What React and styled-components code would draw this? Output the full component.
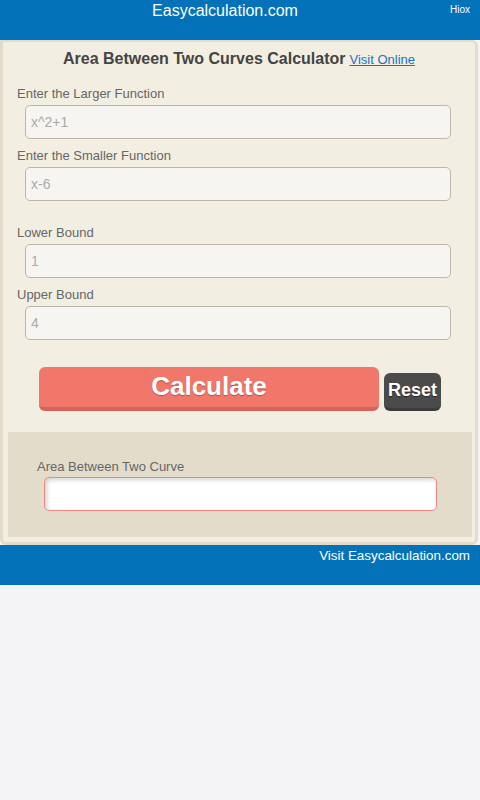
import React from "react";
import styled, { createGlobalStyle } from "styled-components";

const Global = createGlobalStyle`
  html, body { margin: 0; padding: 0; background: #f4f3f6; }
  body { font-family: "Liberation Sans", Arial, sans-serif; }
  * { box-sizing: border-box; }
`;

const Header = styled.header`
  display: flex;
  align-items: flex-start;
  height: 40px;
  background: #0372b9;
  color: #fff;
`;

const SiteName = styled.div`
  flex: 1;
  text-align: center;
  font-size: 16px;
  line-height: 20px;
  padding-top: 1px;
`;

const Hiox = styled.div`
  width: 20px;
  margin-right: 10px;
  font-size: 10px;
  line-height: 20px;
  text-align: right;
`;

const Card = styled.main`
  width: 478px;
  background: #f2eee2;
  border: 3px solid #e3dccb;
  border-top-width: 2px;
  border-radius: 0 6px 6px 6px;
  padding: 7px 2px 5px;
`;

const TitleRow = styled.h1`
  margin: 0 0 15px;
  text-align: center;
  font-size: 16px;
  line-height: 20px;
  font-weight: bold;
  color: #444;
`;

const VisitLink = styled.a`
  font-size: 13px;
  font-weight: normal;
  color: #1f6fcb;
  text-decoration: underline;
  margin-left: 4px;
`;

const Form = styled.div`
  padding-left: 12px;
`;

const Field = styled.div`
  margin-bottom: ${(p) => (p.$mb === undefined ? 8 : p.$mb)}px;
`;

const Label = styled.label`
  display: block;
  font-size: 13px;
  line-height: 16px;
  color: #666;
  padding-top: 1px;
  margin-bottom: 3px;
`;

const Input = styled.input`
  display: block;
  margin-left: 8px;
  width: 426px;
  height: 34px;
  padding: 0 5px;
  background: #f6f5f2;
  border: 1px solid #bdb6ac;
  border-radius: 5px;
  font-family: inherit;
  font-size: 14px;
  color: #444;
  outline: none;
  &::placeholder { color: #aaa; }
`;

const Buttons = styled.div`
  display: flex;
  justify-content: center;
  align-items: flex-start;
  gap: 5px;
  margin-top: 27px;
  padding-left: 2px;
`;

const CalcButton = styled.button`
  width: 340px;
  height: 44px;
  background: #f1776b;
  border: none;
  border-bottom: 4px solid #d6635a;
  border-radius: 6px;
  color: #fff;
  font-family: inherit;
  font-size: 26px;
  font-weight: bold;
  text-shadow: 0 1px 1px rgba(0,0,0,0.3);
  padding: 0 0 2px;
`;

const ResetButton = styled.button`
  margin-top: 6px;
  width: 57px;
  height: 38px;
  background: #4b4b4b;
  border: none;
  border-bottom: 3px solid #3c3c3c;
  border-radius: 6px;
  color: #fff;
  font-family: inherit;
  font-size: 18px;
  font-weight: bold;
  text-shadow: 0 1px 1px rgba(0,0,0,0.5);
  padding: 0;
`;

const Result = styled.section`
  margin: 21px 1px 0 3px;
  background: #e3dccb;
  padding: 26px 0 26px 29px;
`;

const ResultLabel = styled(Label)`
  margin-bottom: 2px;
`;

const ResultInput = styled.input`
  display: block;
  margin-left: 7px;
  width: 393px;
  height: 34px;
  background: #fff;
  border: 1px solid #ef8585;
  border-radius: 5px;
  box-shadow: inset 2px 2px 4px rgba(0,0,0,0.18);
  outline: none;
`;

const Footer = styled.footer`
  height: 40px;
  background: #0372b9;
  color: #fff;
  font-size: 13.4px;
  line-height: 20px;
  text-align: right;
  padding: 1px 10px 0 0;
`;

export default function App() {
  return (
    <>
      <Global />
      <Header>
        <SiteName>Easycalculation.com</SiteName>
        <Hiox>Hiox</Hiox>
      </Header>
      <Card>
        <TitleRow>
          Area Between Two Curves Calculator
          <VisitLink href="#">Visit Online</VisitLink>
        </TitleRow>
        <Form>
          <Field>
            <Label>Enter the Larger Function</Label>
            <Input placeholder="x^2+1" />
          </Field>
          <Field $mb={23}>
            <Label>Enter the Smaller Function</Label>
            <Input placeholder="x-6" />
          </Field>
          <Field>
            <Label>Lower Bound</Label>
            <Input placeholder="1" />
          </Field>
          <Field $mb={0}>
            <Label>Upper Bound</Label>
            <Input placeholder="4" />
          </Field>
        </Form>
        <Buttons>
          <CalcButton>Calculate</CalcButton>
          <ResetButton>Reset</ResetButton>
        </Buttons>
        <Result>
          <ResultLabel>Area Between Two Curve</ResultLabel>
          <ResultInput readOnly />
        </Result>
      </Card>
      <Footer>Visit Easycalculation.com</Footer>
    </>
  );
}
